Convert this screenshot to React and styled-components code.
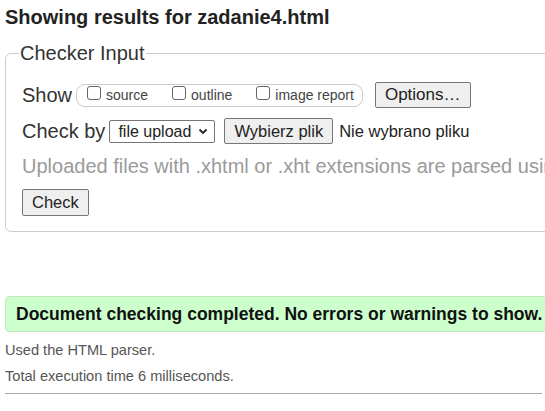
import React from "react";
import styled, { createGlobalStyle } from "styled-components";

const Global = createGlobalStyle`
  html, body {
    margin: 0;
    padding: 0;
    background: #fff;
    overflow: hidden;
  }
  body {
    font-family: "Liberation Sans", Arial, sans-serif;
    color: #222;
  }
`;

const Page = styled.div`
  width: 760px;
  padding: 0 5px;
`;

const Title = styled.h2`
  margin: 5px 0 0;
  font-size: 20px;
  font-weight: bold;
  color: #222;
  line-height: 24px;
`;

const Fieldset = styled.fieldset`
  margin: 13px 0 0;
  padding: 0 16px 15px;
  border: 1px solid #ccc;
  border-radius: 6px;
  width: 700px;
`;

const Legend = styled.legend`
  font-size: 20px;
  line-height: 23px;
  padding: 0 1px;
  margin-left: -3px;
  color: #333;
`;

const Row = styled.div`
  display: flex;
  align-items: center;
  font-size: 20px;
  line-height: 23px;
  color: #333;
  margin-top: ${p => p.$mt || 0}px;
`;

const Pill = styled.div`
  display: flex;
  align-items: center;
  height: 23px;
  box-sizing: border-box;
  border: 1px solid #ccc;
  border-radius: 9px;
  padding: 0 8px 0 10px;
  gap: 24px;
  margin-left: 4px;
`;

const Opt = styled.label`
  display: flex;
  align-items: center;
  gap: 5px;
  font-size: 14px;
  line-height: 16px;
  color: #444;
`;

const Box = styled.span`
  width: 14px;
  height: 14px;
  border: 1px solid #666;
  border-radius: 3px;
  box-sizing: border-box;
  margin-top: -4px;
`;

const Button = styled.button`
  font-family: inherit;
  font-size: ${p => p.$size || 17}px;
  height: ${p => p.$h || 26}px;
  padding: 0 ${p => p.$px || 9}px;
  background: #efefef;
  border: 1px solid #767676;
  border-radius: 2px;
  color: #222;
  margin-left: ${p => p.$ml || 0}px;
`;

const Select = styled.div`
  display: flex;
  align-items: center;
  justify-content: space-between;
  width: 106px;
  height: 23px;
  box-sizing: border-box;
  border: 1px solid #767676;
  border-radius: 2px;
  padding: 0 6px 0 8px;
  margin-left: 4px;
  font-size: 16px;
  color: #222;
  background: #fff;
`;

const NoFile = styled.span`
  font-size: 16.5px;
  color: #222;
  margin-left: 6px;
`;

const Hint = styled.div`
  font-size: 20px;
  line-height: 23px;
  color: #9a9a9a;
  margin-top: 11px;
  white-space: nowrap;
`;

const Success = styled.div`
  margin-top: 64px;
  width: 700px;
  height: 36px;
  box-sizing: border-box;
  background: #ccffcc;
  border: 1px solid #c3e8c3;
  border-radius: 4px;
  display: flex;
  align-items: center;
  padding-left: 10px;
  font-size: 17.5px;
  font-weight: bold;
  color: #111;
`;

const Info = styled.p`
  margin: ${p => p.$mt || 0}px 0 0;
  font-size: 14.6px;
  color: #555;
  line-height: 18px;
`;

const Rule = styled.hr`
  width: 537px;
  margin: 8px 0 0;
  border: 0;
  border-top: 1px solid #aaa;
`;

function Chevron() {
  return (
    <svg width="10" height="7" viewBox="0 0 10 7">
      <path d="M1.5 1.5 L5 5 L8.5 1.5" fill="none" stroke="#222" strokeWidth="1.8" />
    </svg>
  );
}

export default function App() {
  return (
    <>
      <Global />
      <Page>
        <Title>Showing results for zadanie4.html</Title>
        <Fieldset>
          <Legend>Checker Input</Legend>
          <Row $mt={17}>
            <span>Show</span>
            <Pill>
              <Opt><Box />source</Opt>
              <Opt><Box />outline</Opt>
              <Opt><Box />image report</Opt>
            </Pill>
            <Button $ml={12} $px={9}>Options…</Button>
          </Row>
          <Row $mt={10}>
            <span>Check by</span>
            <Select>file upload <Chevron /></Select>
            <Button $ml={9} $size={16.5} $px={9}>Wybierz plik</Button>
            <NoFile>Nie wybrano pliku</NoFile>
          </Row>
          <Hint>Uploaded files with .xhtml or .xht extensions are parsed using the XML parser.</Hint>
          <Row $mt={11}>
            <Button $h={27} $size={16.5} $px={9}>Check</Button>
          </Row>
        </Fieldset>
        <Success>Document checking completed. No errors or warnings to show.</Success>
        <Info $mt={9}>Used the HTML parser.</Info>
        <Info $mt={8}>Total execution time 6 milliseconds.</Info>
        <Rule />
      </Page>
    </>
  );
}
